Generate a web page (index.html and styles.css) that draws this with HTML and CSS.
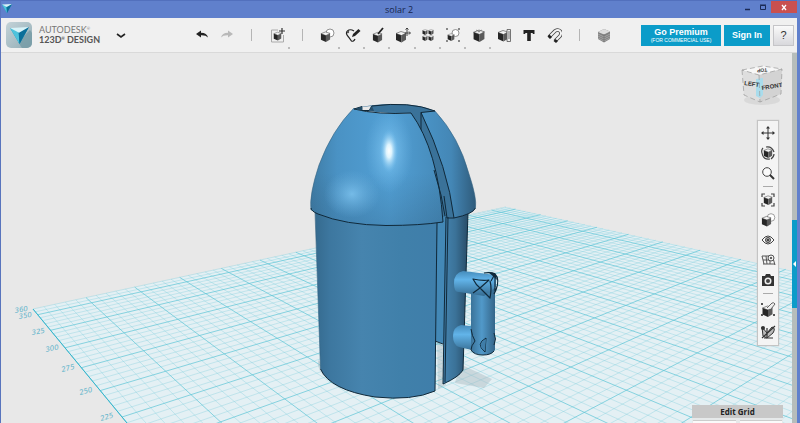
FILE: index.html
```html
<!DOCTYPE html>
<html lang="en">
<head>
<meta charset="utf-8">
<title>solar 2</title>
<link rel="stylesheet" href="styles.css">
</head>
<body>
<svg class="defs" aria-hidden="true">
  <symbol id="cube" viewBox="0 0 12 12">
    <path d="M1 3 6 1 11 2.600 6.500 5Z" fill="#f4f4f4" stroke="#444" stroke-width=".6"/>
    <path d="M1 3 6.500 5V12L1 9.500Z" fill="#262626"/>
    <path d="M6.500 5 11 2.600V9.200L6.500 12Z" fill="#5a5a5a"/>
  </symbol>
  <symbol id="mark" viewBox="0 0 20 18">
    <path d="M0 1 9 4 20 0 10 18Z" fill="#1797bd"/>
    <path d="M0 1 9 4 10 18Z" fill="#4fc3dc"/>
    <path d="M9 4 20 0 10 18Z" fill="#0b6f99"/>
    <path d="M0 1 20 0 9.500 6Z" fill="#d8f3f8"/>
  </symbol>
</svg>
<div class="window">
  <header class="titlebar">
    <svg class="app-icon" width="10" height="9"><use href="#mark"/></svg>
    <h1>solar 2</h1>
    <div class="window-buttons">
      <button aria-label="Minimize"><svg width="16" height="12"><path d="M6 8.500h5" stroke="#1b2a55" stroke-width="1.500"/></svg></button>
      <button aria-label="Maximize"><svg width="16" height="12"><path d="M5.500 4.500h5v4h-5zM5 4h6" fill="none" stroke="#1b2a55"/></svg></button>
      <button class="close" aria-label="Close"><svg width="26" height="12"><path d="m11 4 4 5m0-5-4 5" stroke="#fff" stroke-width="1.300"/></svg></button>
    </div>
  </header>

  <nav class="toolbar">
    <button class="logo" aria-label="Home"><svg width="26" height="26"><path d="M12 20 24 8l2 3v12q0 3-3 3h-7Z" fill="#6f97a3" opacity=".7"/><use href="#mark" x="4" y="5" width="19" height="17"/></svg></button>
    <div class="brand"><span>AUTODESK<sup>®</sup></span><strong>123D<sup>®</sup> DESIGN</strong></div>
    <button class="caret" aria-label="Menu"><svg width="10" height="8"><path d="m1 3 4 3 4-3" fill="none" stroke="#222" stroke-width="1.600"/></svg></button>
    <div class="tools">
      <button aria-label="Undo"><svg width="16" height="18"><path d="M2 8 7 4.500v2.300q6 .2 7 4.700-2-2.500-7-2.300V11.500Z" fill="#222"/></svg></button>
      <button aria-label="Redo"><svg width="16" height="18"><path d="M14 8 9 4.500v2.300q-6 .2-7 4.700 2-2.500 7-2.300V11.500Z" fill="#b9b9b9"/></svg></button>
      <hr>
      <button class="more" aria-label="Insert"><svg width="16" height="18"><path d="M9 4H2.500v12h12V9" fill="none" stroke="#aaa"/><use href="#cube" x="4" y="5" width="9" height="10"/><path d="M13 2v6M10 5h6" stroke="#333" stroke-width="1.200"/></svg></button>
      <hr>
      <button class="more" aria-label="Primitives"><svg width="16" height="18"><circle cx="11" cy="7" r="4" fill="#fff" stroke="#777" stroke-width=".8"/><use href="#cube" x="1" y="5" width="11" height="11"/></svg></button>
      <button class="more" aria-label="Sketch"><svg width="16" height="18"><path d="M9 5Q5 2.500 2.500 5t1 6l3 4q2 1 3.500-2" fill="none" stroke="#222" stroke-width="1.200"/><path d="m7 11 1-3 5.500-5 2 2-5.500 5Z" fill="#222"/><circle cx="3" cy="6" r="1.200" fill="#555"/></svg></button>
      <button class="more" aria-label="Construct"><svg width="16" height="18"><use href="#cube" x="2" y="5" width="11" height="12"/><path d="m8 8 5-6" stroke="#222" stroke-width="1.800"/></svg></button>
      <button class="more" aria-label="Modify"><svg width="16" height="18"><use href="#cube" x="0" y="4" width="12" height="13"/><path d="M10 7h5M12 2v8M10.500 3.500 12 2l1.500 1.500M14 5.500 15.500 7 14 8.500" fill="none" stroke="#333" stroke-width=".9"/></svg></button>
      <button class="more" aria-label="Pattern"><svg width="16" height="18"><use href="#cube" x="2" y="3" width="6" height="6"/><use href="#cube" x="8" y="3" width="6" height="6"/><use href="#cube" x="2" y="9" width="6" height="6"/><use href="#cube" x="8" y="9" width="6" height="6"/></svg></button>
      <button class="more" aria-label="Grouping"><svg width="16" height="18"><circle cx="10.500" cy="7" r="3.500" fill="#fff" stroke="#777" stroke-width=".8"/><use href="#cube" x="2" y="7" width="8" height="8"/><path d="M1 2h2v2H1zM13 2h2v2h-2zM1 14h2v2H1zM13 14h2v2h-2z" fill="#888"/></svg></button>
      <button class="more" aria-label="Combine"><svg width="16" height="18"><use href="#cube" x="1" y="3" width="14" height="13"/><path d="m5 4 4 2M7 6l4-2" stroke="#777" stroke-width=".7"/></svg></button>
      <button aria-label="Measure"><svg width="16" height="18"><use href="#cube" x="1" y="3" width="12" height="13"/><path d="M11 3.500h3.500v12H11zM12 6h2m-2 2h2m-2 2h2m-2 2h2" fill="#eee" stroke="#555" stroke-width=".8"/></svg></button>
      <button aria-label="Text"><svg width="16" height="18"><path d="M2.500 4h11v4H12l-.5-1H9.800v8H6.200V7H4.500L4 8H2.500Z" fill="#222"/></svg></button>
      <button aria-label="Snap"><svg width="16" height="18"><path d="m3 11 6-6q3-2 5 0t0 5l-5 5" fill="none" stroke="#444" stroke-width="3.600"/><path d="m3 11 6-6q3-2 5 0t0 5l-5 5" fill="none" stroke="#f4f4f4" stroke-width="2"/><path d="m1.500 10.500 2-2L6 11l-2 2ZM7.500 15l2-2 2.500 2-2 2Z" fill="#222"/></svg></button>
      <hr>
      <button aria-label="Material"><svg width="16" height="18"><path d="M2 6 8 3l6 2.500V13l-6 3.500L2 13Z" fill="#808080"/><path d="m2 6 6-3 6 2.500L8 8.500Z" fill="#ddd"/><path d="m2 8 6 3 6-3M2 10l6 3 6-3M2 12l6 3 6-3" fill="none" stroke="#bbb" stroke-width=".6"/><path d="M8 8v8" stroke="#666" stroke-width=".5"/></svg></button>
    </div>
    <div class="account">
      <button class="primary premium">Go Premium<small>(FOR COMMERCIAL USE)</small></button>
      <button class="primary signin">Sign In</button>
      <button class="help">?</button>
    </div>
  </nav>

  <main class="workspace">
    <svg class="scene" viewBox="1 53 791 370" preserveAspectRatio="xMinYMin slice" role="img" aria-label="Model on grid">
      <defs>
        <linearGradient id="body"><stop offset="0" stop-color="#356a8e"/><stop offset=".12" stop-color="#3d779f"/><stop offset=".38" stop-color="#4684ae"/><stop offset=".7" stop-color="#4080aa"/><stop offset="1" stop-color="#3f7eaa"/></linearGradient>
        <linearGradient id="side"><stop offset="0" stop-color="#4585b1"/><stop offset=".5" stop-color="#3b7298"/><stop offset="1" stop-color="#284c67"/></linearGradient>
        <linearGradient id="dome"><stop offset="0" stop-color="#3f7ca5"/><stop offset=".2" stop-color="#4a92c4"/><stop offset=".6" stop-color="#52a0d5"/><stop offset="1" stop-color="#4589b8"/></linearGradient>
        <linearGradient id="domeSide"><stop offset="0" stop-color="#4a94c7"/><stop offset=".55" stop-color="#4487b6"/><stop offset="1" stop-color="#2f5b7b"/></linearGradient>
        <linearGradient id="lowShade" x2="0" y2="1"><stop offset=".55" stop-color="#28506f" stop-opacity="0"/><stop offset="1" stop-color="#28506f" stop-opacity=".25"/></linearGradient>
        <radialGradient id="shine"><stop offset="0" stop-color="#fff"/><stop offset=".3" stop-color="#e4f7ff" stop-opacity=".95"/><stop offset="1" stop-color="#6dbdf0" stop-opacity="0"/></radialGradient>
        <radialGradient id="glow"><stop offset="0" stop-color="#86ccf7" stop-opacity=".8"/><stop offset="1" stop-color="#6fb6e5" stop-opacity="0"/></radialGradient>
        <linearGradient id="grip"><stop offset="0" stop-color="#3b7399"/><stop offset=".45" stop-color="#5199c9"/><stop offset="1" stop-color="#346589"/></linearGradient>
        <linearGradient id="peg" x2="0" y2="1"><stop offset="0" stop-color="#458bba"/><stop offset=".35" stop-color="#62b4e9"/><stop offset="1" stop-color="#356b90"/></linearGradient>
      </defs>
      <g id="grid"></g>
      <g class="axis-labels">
        <text transform="translate(15 313) rotate(-10)">360</text>
        <text transform="translate(19 319) rotate(-10)">350</text>
        <text transform="translate(32 335) rotate(-10)">325</text>
        <text transform="translate(46 352) rotate(-12)">300</text>
        <text transform="translate(62 372) rotate(-14)">275</text>
        <text transform="translate(80 395) rotate(-15)">250</text>
        <text transform="translate(101 421) rotate(-16)">225</text>
      </g>
      <path d="M460 364 492 379 484 388 455 383ZM318 360q-2 10 10 20l8-4ZM437 340h9v45l-8 4Z" fill="#9fb2ba" opacity=".4"/>
      <g class="model">
        <path d="M435 215h12v130l-12-4Z" fill="#4388b6"/>
        <path d="M435 341 443 344" class="edge"/>
        <path d="M446 212h22L463 370Q459 377 443 384Z" fill="url(#side)"/>
        <path d="M468 212 463 370Q459 377 443 384L446 216M448 217 445 382" class="edge"/>
        <path d="M315 210H438L435 391Q412 401 375 397 330 390 320.500 369Z" fill="url(#body)"/>
        <path d="M320.500 369Q330 390 375 397 412 401 435 391L437 221" class="edge"/>
        <path d="M315 212 320.500 369" class="edge soft"/>
        <path d="M353 109Q370 104 395 104 420 104 435 111L440 145 456 217H443L411 113Q380 114 353 109Z" fill="#3a7299"/>
        <path d="M421 112.500 435 111Q459 137 469 174 477 198 475.500 208 473 214 454 218 448 168 421 112.500Z" fill="url(#domeSide)"/>
        <path d="M435 111Q459 137 469 174 477 198 475.500 208" class="edge soft"/>
        <path d="M475.500 208Q473 214 454 218 448 168 421 112.500L435 111M421 112.500V131M454 218H447L444 196" class="edge"/>
        <path d="M354 108Q332 130 319 165 309 195 311 210 335 225 386 225.500 420 225.500 443 222 438 150 411 113 378 115 354 109Z" fill="url(#dome)"/>
        <path d="M354 108Q332 130 319 165 309 195 311 210 335 225 386 225.500 420 225.500 443 222 438 150 411 113 378 115 354 109Z" fill="url(#lowShade)"/>
        <ellipse cx="389" cy="151" rx="24" ry="42" fill="url(#glow)"/>
        <ellipse cx="389" cy="151" rx="9" ry="22" fill="url(#shine)"/>
        <ellipse cx="352" cy="194" rx="28" ry="24" fill="url(#glow)" opacity=".9"/>
        <path d="M354 108Q332 130 319 165 309 195 311 210" class="edge soft"/>
        <path d="M311 208Q311 211 318 214 345 225 386 225.500 420 225.500 443 222 438 150 411 113 378 115 354 109L362 106.500V110.500H369L372 106Q410 101 435 111M434 170 441 195 445 216" class="edge"/>
        <path d="M355 109 362 106.500V110.500Z" fill="#234b66"/>
        <path d="M362.500 110V107L371 106 369 110Z" fill="#e8e8e8"/>
        <path d="m369 110.500 3-4.500 2 5Z" fill="#274f6b"/>
        <path d="M461 325Q453 327 453 336T459 347L480 352V327Z" fill="url(#peg)"/>
        <path d="M471 288H495V350Q492 355 483 355 472 354 471 350Z" fill="url(#grip)"/>
        <path d="M463 271Q454 273 454 283T459 292L484 296 496 287 496 275Z" fill="url(#peg)"/>
        <path d="M471 329q1 7 4 12-4 5-4 9 3 5 12 5 8 0 11-4M486 338q-11 6-1 14ZM494 333q3 6 0 12" class="edge"/>
        <path d="M486 339q-10 6-1 12Z" fill="#3f7da8"/>
        <path d="M473 279q9 2 16 1l-9 8q-4-3-7-9ZM480 288l10 10q2-10 0-17M473 293l7-5M484 273q7-1 11 1 5 5 1 16l-2 4M491 281l4-7v17" class="edge strong"/>
        <path d="m488 272 7 1 2 7-3-3Z" fill="#10283a"/>
      </g>
    </svg>

    <div class="view-cube" role="img" aria-label="View cube">
      <svg width="48" height="44">
        <ellipse cx="24" cy="37" rx="18" ry="5" fill="#cfcfcf" opacity=".6"/>
        <path d="M4 7 25 3 44 6 21 12Z" fill="#f7f7f7"/>
        <path d="M4 7 21 12 22 39 6 32Z" fill="#dedede"/>
        <path d="M21 12 44 6 43 31 22 39Z" fill="#d3d3d3"/>
        <path d="M18 16l7-1v17l-3 3-4-2Z" fill="#a9dcec"/>
        <path d="M4 7 25 3 44 6 21 12ZM4 7 6 32 22 39 43 31 44 6M21 12l1 27" fill="none" stroke="#999" stroke-width=".7" stroke-dasharray="5 3"/>
        <text x="6" y="22" transform="rotate(7 6 22)">LEFT</text>
        <text x="24" y="27" transform="rotate(-9 24 27)">FRONT</text>
        <text class="top" x="29" y="5" transform="rotate(174 29 5)">TOP</text>
      </svg>
    </div>

    <aside class="side-tools">
      <button aria-label="Pan"><svg width="16" height="16"><path d="M8 2v12M2 8h12" stroke="#333"/><path d="m8 1 2 2.500H6ZM8 15l2-2.500H6ZM1 8l2.500-2v4ZM15 8l-2.500-2v4Z" fill="#333"/></svg></button>
      <button aria-label="Orbit"><svg width="16" height="16"><use href="#cube" x="3" y="3" width="10" height="10"/><path d="M6 2q6-1 8 5M2 8q1 7 8 6M3 3q-2 2-1 5M14 9q0 3-3 5" fill="none" stroke="#444" stroke-width="1.200"/></svg></button>
      <button aria-label="Zoom"><svg width="16" height="16"><circle cx="7" cy="7" r="4.300" fill="#fafafa" stroke="#444"/><path d="m10 10 4 4" stroke="#333" stroke-width="2"/></svg></button>
      <hr>
      <button aria-label="Fit"><svg width="16" height="16"><use href="#cube" x="3" y="3" width="10" height="10"/><path d="M2 5V2h3M11 2h3v3M14 11v3h-3M5 14H2v-3" fill="none" stroke="#444" stroke-width="1.200"/></svg></button>
      <button aria-label="Shading"><svg width="16" height="16"><circle cx="11" cy="5.500" r="3.800" fill="#fff" stroke="#888" stroke-width=".8"/><use href="#cube" x="1" y="3" width="11" height="12"/></svg></button>
      <button aria-label="Visibility"><svg width="16" height="16"><path d="M2 8q6-8 12 0-6 8-12 0Z" fill="#f7f7f7" stroke="#444"/><circle cx="8" cy="8" r="2.500" fill="#aaa" stroke="#444"/><circle cx="8" cy="8" r="1" fill="#222"/></svg></button>
      <button aria-label="Grid visibility"><svg width="16" height="16"><path d="M2 4h11M3 8h11M3 12h12M2 4l2 8M6 4l1 8M10 4v8M13 6l2 7" fill="none" stroke="#555"/><circle cx="11" cy="6" r="3" fill="#eee" stroke="#555"/><circle cx="11" cy="6" r="1" fill="#333"/></svg></button>
      <button aria-label="Snapshot"><svg width="16" height="16"><path d="M2 4h3l1-2h4l1 2h3v10H2Z" fill="#333"/><circle cx="8" cy="9" r="3.500" fill="#eee"/><circle cx="8" cy="9" r="2" fill="#444"/></svg></button>
      <hr>
      <button class="tall" aria-label="Snap to grid"><svg width="16" height="16"><use href="#cube" x="1" y="4" width="13" height="12"/><path d="m7 7 5-5q2-1 3 1l-4 5" fill="#eee" stroke="#666"/><path d="M1 2h2v2H1zM1 13h2v2H1zM13 13h2v2h-2z" fill="#555"/></svg></button>
      <button class="tall" aria-label="Hide sketches"><svg width="16" height="16"><path d="M2 3l5 6 5-6q4 1 1 6l-6 5-4-2Z" fill="#bbb" stroke="#333"/><path d="m2 14 13-12M7 4v9M4 14h9" stroke="#333" stroke-width="1.200"/><circle cx="3" cy="4" r="2" fill="#333"/></svg></button>
    </aside>

    <section class="grid-panel">
      <button>Edit Grid</button>
      <div class="grid-fields"><span></span><span></span></div>
    </section>
  </main>
  <div class="drawer"><button aria-label="Open parts panel"><svg width="5" height="8"><path d="M4 1v6L1 4Z" fill="#fff"/></svg></button></div>
</div>
<script src="grid.js"></script>
</body>
</html>
```
FILE: styles.css
```css
* { box-sizing: border-box; }
body { margin: 0; font-family: "Open Sans", "Noto Sans", sans-serif; color: #333; }
button { border: 0; padding: 0; margin: 0; background: none; font: inherit; color: inherit; display: flex; align-items: center; justify-content: center; }
svg { display: block; }
.defs { position: absolute; width: 0; height: 0; }

.window {
  min-height: 100vh;
  display: grid;
  grid-template: 18px 35px 1fr / 1fr 5px;
  background: #6080cc;
  border-left: 1px solid #5874bd;
  border-right: 3px solid #6080cc;
  overflow: hidden;
}

.titlebar {
  grid-column: 1 / -1;
  display: grid;
  grid-template-columns: 1fr auto 1fr;
  background: #6080cc;
  border-top: 1px solid #5270bd;
}
.app-icon { margin: 3px 1px; }
.titlebar h1 { margin: 0; font-size: 9px; line-height: 17px; font-weight: 400; color: #17264c; }
.window-buttons { display: flex; justify-content: flex-end; align-items: flex-start; }
.window-buttons .close { background: #c9504f; }

.toolbar {
  grid-column: 1 / -1;
  display: flex;
  align-items: center;
  padding: 0 3px 0 5px;
  background: #f0f0f0;
  border-bottom: 1px solid #d9d9d9;
}
.logo { border-radius: 5px; overflow: hidden; background: linear-gradient(135deg, #c4d3d8, #91acb5); }
.brand { width: 77px; margin-left: 7px; font-family: Lato, sans-serif; font-size: 9px; line-height: 10px; color: #555; white-space: nowrap; }
.brand span, .brand strong { display: block; }
.brand span { font-weight: 400; color: #777; }
.brand strong { font-weight: 700; }
.brand sup { font-size: 4px; line-height: 1px; vertical-align: 3px; }
.caret { height: 20px; }
.tools { display: grid; grid-template-columns: repeat(17, 1fr); flex: 0 0 428px; margin-left: 63px; align-items: center; }
.tools button { height: 30px; position: relative; }
.tools hr { width: 1px; height: 12px; border: 0; margin: 0 auto; background: #b5b5b5; }
.more::after { content: ""; position: absolute; right: 0; bottom: 1px; width: 2px; height: 2px; background: #bbb; }
.account { display: flex; gap: 3px; margin-left: auto; align-items: center; }
.primary { height: 21px; background: #0b9cc9; color: #fff; font: bold 9px/10px "Liberation Sans", sans-serif; white-space: nowrap; }
.premium { width: 80px; flex-direction: column; }
.premium small { font-size: 5px; line-height: 7px; font-weight: 400; }
.signin { width: 46px; }
.help { width: 21px; height: 21px; background: linear-gradient(#fafafa, #d8d8dc); border: 1px solid #c5c5c8; font: 11px/12px "Liberation Sans", sans-serif; }

.workspace { position: relative; background: #e8e8e8; overflow: hidden; }
.scene { position: absolute; inset: 0; width: 100%; height: 100%; }
.grid-base { fill: #e4f0f4; }
.grid-minor { fill: none; stroke: #74cadb; stroke-width: 0.6; opacity: 0.55; }
.grid-major { fill: none; stroke: #5cc4d6; stroke-width: 1; opacity: 0.7; }
.grid-axis { fill: none; stroke: #35b5cc; stroke-width: 1; }
.axis-labels { font: italic 7px "DejaVu Sans", sans-serif; fill: #62b4cb; }
.edge { fill: none; stroke: #10293a; stroke-width: 1; stroke-linejoin: round; }
.soft { stroke: #356382; stroke-width: 0.6; }
.strong { stroke-width: 1.2; }

.view-cube { position: absolute; top: 10px; right: 6px; }
.view-cube text { font: bold 6px "Liberation Sans", sans-serif; fill: #333; }
.view-cube .top { font-size: 5px; }

.side-tools {
  position: absolute;
  top: 67px;
  right: 13px;
  width: 22px;
  padding: 2px 0;
  background: #f4f4f4;
  border: 1px solid #c4c4c4;
  box-shadow: 0 0 1px #bbb;
}
.side-tools button { width: 20px; height: 20px; }
.side-tools .tall { height: 23px; }
.side-tools hr { width: 10px; height: 1px; margin: 3px auto; border: 0; background: #aaa; }

.grid-panel { position: absolute; right: 9px; bottom: 0; width: 91px; background: #e6e9ea; }
.grid-panel button { width: 100%; height: 13px; background: #c8c8c8; color: #222; font: bold 8px/13px "Open Sans", sans-serif; }
.grid-fields { display: grid; grid-template-columns: 1fr 1fr; gap: 4px; padding: 2px 1px 0; }
.grid-fields span { height: 3px; background: #fafafa; border-top: 1px solid #ccc; }

.drawer { background: #b6bdbb; }
.drawer button { width: 5px; height: 88px; margin-top: 167px; background: #0b9cc9; }
```
FILE: grid.js
```js
// Draws the work plane in perspective: s runs along the back edge, t towards the viewer.
const S_MAX = 13.65, T_MAX = 14.4, T_FIRST = 0.4;

function project(s, t) {
  const w = 1 + 0.0437 * s - 0.0553 * t;
  return [(33 + 56.75 * s + 9.74 * t) / w, (309 + 1.575 * s - 3.06 * t) / w]
    .map(v => v.toFixed(1)).join(" ");
}
const line = (s1, t1, s2, t2) => `M${project(s1, t1)}L${project(s2, t2)}`;

let minor = "", major = "";
for (let i = 0; i / 5 <= S_MAX; i++) {
  const d = line(i / 5, 0, i / 5, T_MAX);
  if (i % 5 === 0) major += d; else minor += d;
}
for (let i = -2; T_FIRST + i / 5 <= T_MAX; i++) {
  const t = T_FIRST + i / 5;
  const d = line(0, t, S_MAX, t);
  if (i % 5 === 0) major += d; else minor += d;
}
const base = `M${project(0, 0)}L${project(S_MAX, 0)}L${project(S_MAX, T_MAX)}L${project(0, T_MAX)}Z`;
document.getElementById("grid").innerHTML =
  `<path class="grid-base" d="${base}"/><path class="grid-minor" d="${minor}"/>` +
  `<path class="grid-major" d="${major}"/><path class="grid-axis" d="${line(0, 0, 0, T_MAX)}"/>`;
```
